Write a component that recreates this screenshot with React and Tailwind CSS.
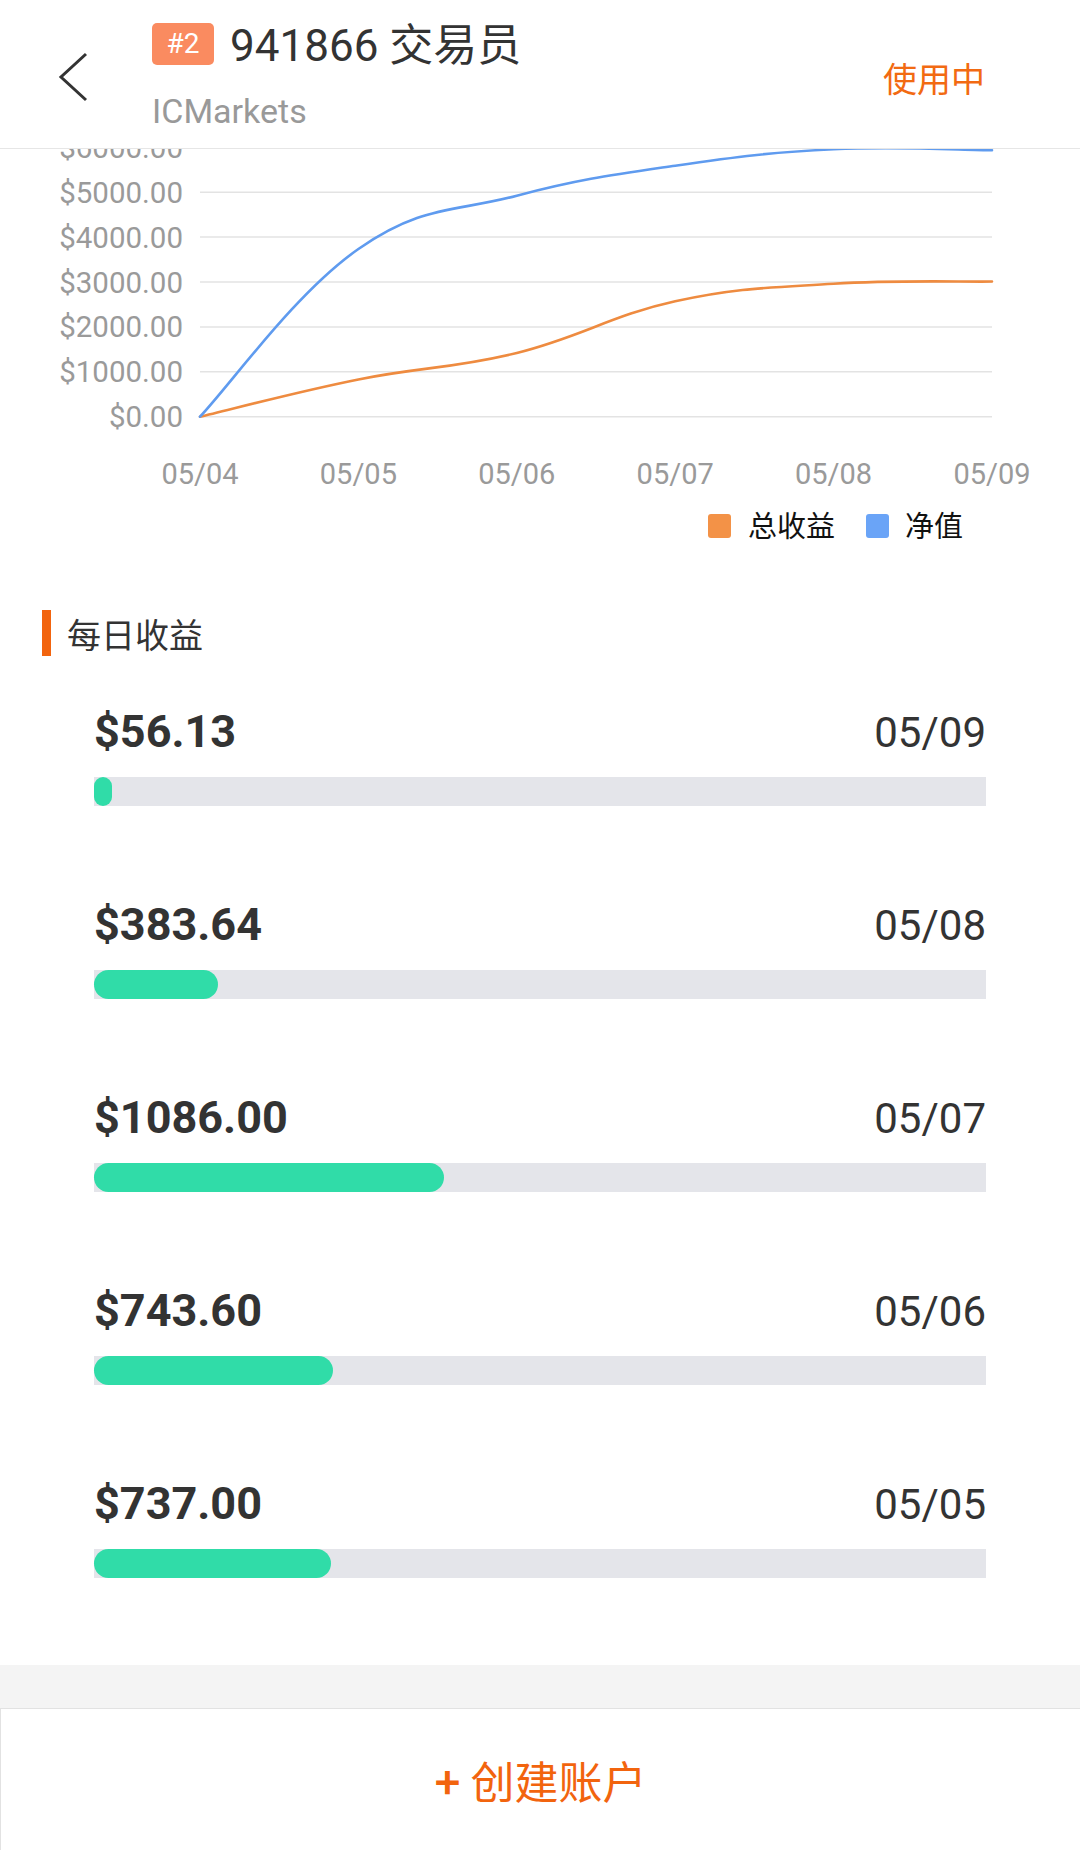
const orange = [0, 830, 1420, 2570, 2960, 3010];
const equity = [0, 3735, 4922, 5590, 5955, 5935];
const days = ["05/04", "05/05", "05/06", "05/07", "05/08", "05/09"];
const ticks = [6000, 5000, 4000, 3000, 2000, 1000, 0];

const daily = [
  { amount: "$56.13", value: 56.13, date: "05/09" },
  { amount: "$383.64", value: 383.64, date: "05/08" },
  { amount: "$1086.00", value: 1086, date: "05/07" },
  { amount: "$743.60", value: 743.6, date: "05/06" },
  { amount: "$737.00", value: 737, date: "05/05" },
];

const X0 = 200;
const STEP = 158.4;
const Y0 = 416.7;
const K = 0.0449;

const px = (i) => X0 + i * STEP;
const py = (v) => Y0 - v * K;

function curvePath(vals) {
  const pts = vals.map((v, i) => [px(i), py(v)]);
  let d = `M${pts[0][0]},${pts[0][1]}`;
  for (let i = 0; i < pts.length - 1; i++) {
    const a = pts[i - 1] || pts[i];
    const b = pts[i];
    const c = pts[i + 1];
    const e = pts[i + 2] || pts[i + 1];
    const c1 = [b[0] + (c[0] - a[0]) * 0.2, b[1] + (c[1] - a[1]) * 0.2];
    const c2 = [c[0] - (e[0] - b[0]) * 0.2, c[1] - (e[1] - b[1]) * 0.2];
    d += ` C${c1[0]},${c1[1]} ${c2[0]},${c2[1]} ${c[0]},${c[1]}`;
  }
  return d;
}

function Chart() {
  return (
    <svg width="1080" height="440" viewBox="0 149 1080 440" className="block shrink-0">
      {ticks.map((t) => (
        <g key={t}>
          <line x1="200" x2="992" y1={py(t)} y2={py(t)} stroke="#e3e3e3" strokeWidth="1.5" />
          <text
            x="183"
            y={py(t) + 10.5}
            textAnchor="end"
            fontSize="29.5"
            fill="#9a9a9a"
            fontFamily="Roboto, sans-serif"
          >
            ${t}.00
          </text>
        </g>
      ))}
      {days.map((d, i) => (
        <text
          key={d}
          x={px(i)}
          y="484"
          textAnchor="middle"
          fontSize="29"
          fill="#9a9a9a"
          fontFamily="Roboto, sans-serif"
        >
          {d}
        </text>
      ))}
      <path d={curvePath(orange)} fill="none" stroke="#ee8b40" strokeWidth="2.6" strokeLinecap="round" />
      <path d={curvePath(equity)} fill="none" stroke="#5f9bef" strokeWidth="2.6" strokeLinecap="round" />

      <rect x="708" y="514" width="23" height="24" rx="3" fill="#f39247" />
      <text x="748" y="537" fontSize="29" fill="#111" fontFamily="'Noto Sans CJK SC', sans-serif">
        总收益
      </text>
      <rect x="866" y="514" width="23" height="24" rx="3" fill="#6aa4f7" />
      <text x="905" y="537" fontSize="29" fill="#111" fontFamily="'Noto Sans CJK SC', sans-serif">
        净值
      </text>
    </svg>
  );
}

function DailyRow({ item }) {
  const pct = (item.value / 2770) * 100;
  return (
    <div className="flex flex-col">
      <div className="h-[46px] flex items-baseline justify-between">
        <span className="text-[45px] leading-[46px] font-bold text-[#333]">{item.amount}</span>
        <span className="text-[42px] leading-[46px] text-[#333]">{item.date}</span>
      </div>
      <div className="mt-[22px] h-[29px] bg-[#e4e5ea]">
        <div className="h-full rounded-full bg-[#30dca8]" style={{ width: `${pct}%` }} />
      </div>
    </div>
  );
}

export default function App() {
  return (
    <div className="w-[1080px] h-[1850px] bg-white flex flex-col overflow-hidden font-['Roboto','Noto_Sans_CJK_SC',sans-serif]">
      <div className="h-[149px] shrink-0 border-b border-[#e6e6e6] flex items-center">
        <div className="ml-[58px] mt-[6px] w-[30px]">
          <svg width="30" height="50" viewBox="0 0 30 50">
            <polyline points="28,2 3,25 28,48" fill="none" stroke="#333" strokeWidth="3" />
          </svg>
        </div>
        <div className="ml-[64px] self-start pt-[23px] flex flex-col">
          <div className="h-[42px] flex items-center gap-[16px]">
            <span className="h-[42px] w-[62px] rounded-[5px] bg-[#fa8b60] text-white text-[28px] flex items-center justify-center">
              #2
            </span>
            <span className="text-[44px] leading-[42px] text-[#333] mt-[4px]">941866 交易员</span>
          </div>
          <div className="mt-[29px] text-[34px] leading-[34px] text-[#999]">ICMarkets</div>
        </div>
        <div className="ml-auto mr-[95px] mt-[6px] text-[34px] text-[#f26a12] font-['Noto_Sans_CJK_SC',sans-serif]">
          使用中
        </div>
      </div>

      <Chart />

      <div className="mt-[21px] h-[46px] pl-[42px] flex items-center gap-[16px]">
        <div className="w-[9px] h-[46px] bg-[#f2640e]" />
        <span className="text-[34px] text-[#333] font-['Noto_Sans_CJK_SC',sans-serif]">每日收益</span>
      </div>

      <div className="mt-[53px] px-[94px] flex flex-col gap-[96px]">
        {daily.map((item) => (
          <DailyRow key={item.date} item={item} />
        ))}
      </div>

      <div className="mt-auto shrink-0">
        <div className="h-[43px] bg-[#f4f4f4]" />
        <div className="h-[142px] bg-white border-t border-l border-[#e2e2e2] flex items-center justify-center">
          <span className="text-[44px] text-[#f2640e] font-['Noto_Sans_CJK_SC',sans-serif]">
            <span className="font-bold">+</span> 创建账户
          </span>
        </div>
      </div>
    </div>
  );
}
